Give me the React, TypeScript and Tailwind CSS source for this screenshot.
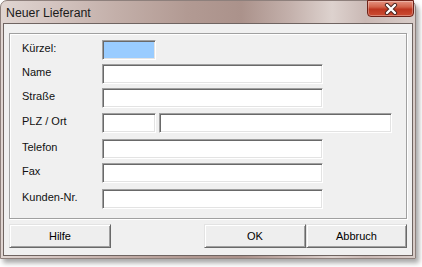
import React from 'react';

const font = { fontFamily: '"Liberation Sans", Arial, sans-serif' };

function Field({ w, blue }: { w: string; blue?: boolean }) {
  return (
    <div
      className={`${w} h-[20px] border border-t-[#a0a0a0] border-l-[#a0a0a0] border-b-white border-r-white shadow-[inset_1px_1px_0_#696969,inset_-1px_-1px_0_#e3e3e3] ${
        blue ? 'bg-[#99ccff]' : 'bg-white'
      }`}
    />
  );
}

function Row({ label, mt, children }: { label: string; mt: string; children: React.ReactNode }) {
  return (
    <div className={`flex items-start ${mt}`}>
      <div className="w-[80px] pt-[1px] text-[11px] leading-[14px] text-[#111]">{label}</div>
      {children}
    </div>
  );
}

function Button({ label, w }: { label: string; w: string }) {
  return (
    <div
      className={`${w} h-[24px] flex items-center justify-center text-[11px] text-black bg-[#eeeeee] border border-t-[#e3e3e3] border-l-[#e3e3e3] border-b-[#696969] border-r-[#696969] shadow-[inset_1px_1px_0_#fff,inset_-1px_-1px_0_#a0a0a0]`}
    >
      {label}
    </div>
  );
}

export default function App() {
  return (
    <div className="w-[422px] h-[267px] bg-white" style={font}>
      <div className="w-[416px] h-[259px] flex flex-col rounded-t-[7px] border border-[#8e807c] px-[2px] pb-[2px] bg-[linear-gradient(90deg,#e0d5d1_0%,#d4c5c1_12%,#c3afa9_28%,#b29a93_45%,#ab928b_58%,#c4b1ac_70%,#ddd2ce_80%,#cab9b5_88%,#d8ccc8_100%)] shadow-[3px_4px_5px_rgba(0,0,0,0.35)]">
        {/* title bar */}
        <div className="h-[22px] flex items-start justify-between">
          <div className="pl-[3px] pt-[5px] text-[12.3px] leading-[14px] text-[#1a1a1a]">Neuer Lieferant</div>
          <div className="w-[47px] h-[17px] -mt-[1px] mr-[-1px] flex items-center justify-center rounded-b-[4px] border border-[#6e2218] bg-[linear-gradient(180deg,#e59482_0%,#d2624a_40%,#bd3620_55%,#cc4d33_100%)] shadow-[inset_0_0_0_1px_rgba(255,255,255,0.3)]">
            <svg width="14" height="12" viewBox="0 0 14 12">
              <path d="M3 2 L11 10 M11 2 L3 10" stroke="#4a2520" strokeWidth="4.2" strokeLinecap="round" />
              <path d="M3 2 L11 10 M11 2 L3 10" stroke="#ffffff" strokeWidth="2.4" strokeLinecap="round" />
            </svg>
          </div>
        </div>

        {/* client area */}
        <div className="flex-1 flex flex-col border border-[#6f6461] bg-[#f0f0f0] pl-[5px] pt-[9px]">
          <div className="w-[398px] h-[186px] border border-[#a0a0a0] shadow-[inset_1px_1px_0_#fff,1px_1px_0_#fff] pl-[12px] pt-[6px]">
            <Row label="Kürzel:" mt="mt-0">
              <Field w="w-[54px]" blue />
            </Row>
            <Row label="Name" mt="mt-[4px]">
              <Field w="w-[221px]" />
            </Row>
            <Row label="Straße" mt="mt-[4px]">
              <Field w="w-[221px]" />
            </Row>
            <Row label="PLZ / Ort" mt="mt-[5px]">
              <div className="flex gap-[3px]">
                <Field w="w-[54px]" />
                <Field w="w-[233px]" />
              </div>
            </Row>
            <Row label="Telefon" mt="mt-[6px]">
              <Field w="w-[221px]" />
            </Row>
            <Row label="Fax" mt="mt-[4px]">
              <Field w="w-[221px]" />
            </Row>
            <Row label="Kunden-Nr." mt="mt-[6px]">
              <Field w="w-[221px]" />
            </Row>
          </div>

          <div className="w-[398px] mt-[5px] flex justify-between">
            <Button label="Hilfe" w="w-[102px]" />
            <div className="flex">
              <Button label="OK" w="w-[102px]" />
              <Button label="Abbruch" w="w-[101px]" />
            </div>
          </div>
        </div>
      </div>
    </div>
  );
}
